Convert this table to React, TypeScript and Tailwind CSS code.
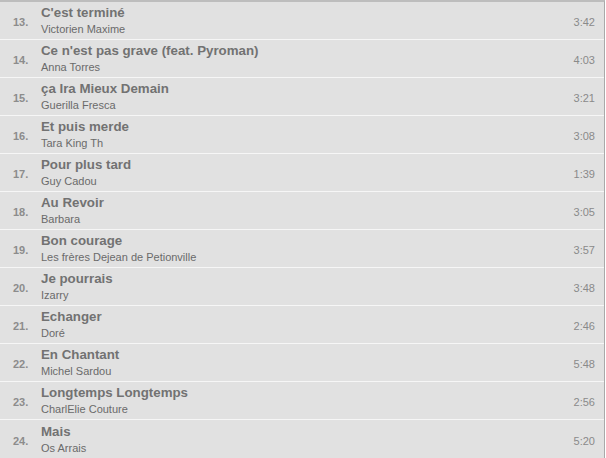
import React from 'react'

interface Track {
  num: number
  title: string
  artist: string
  duration: string
}

const tracks: Track[] = [
  { num: 13, title: "C'est terminé", artist: 'Victorien Maxime', duration: '3:42' },
  { num: 14, title: "Ce n'est pas grave (feat. Pyroman)", artist: 'Anna Torres', duration: '4:03' },
  { num: 15, title: 'ça Ira Mieux Demain', artist: 'Guerilla Fresca', duration: '3:21' },
  { num: 16, title: 'Et puis merde', artist: 'Tara King Th', duration: '3:08' },
  { num: 17, title: 'Pour plus tard', artist: 'Guy Cadou', duration: '1:39' },
  { num: 18, title: 'Au Revoir', artist: 'Barbara', duration: '3:05' },
  { num: 19, title: 'Bon courage', artist: 'Les frères Dejean de Petionville', duration: '3:57' },
  { num: 20, title: 'Je pourrais', artist: 'Izarry', duration: '3:48' },
  { num: 21, title: 'Echanger', artist: 'Doré', duration: '2:46' },
  { num: 22, title: 'En Chantant', artist: 'Michel Sardou', duration: '5:48' },
  { num: 23, title: 'Longtemps Longtemps', artist: 'CharlElie Couture', duration: '2:56' },
  { num: 24, title: 'Mais', artist: 'Os Arrais', duration: '5:20' },
]

function TrackRow({ track }: { track: Track }) {
  return (
    <li className="flex h-[38px] items-center border-b border-[#f6f6f6] bg-[#e1e1e1] last:border-b-0">
      <span className="w-[41px] shrink-0 pl-[13px] pt-[4px] text-[11px] font-bold text-[#8c8c8c]">
        {track.num}.
      </span>
      <div className="flex min-w-0 flex-1 flex-col pb-[1px]">
        <span className="text-[13.3px] font-bold leading-[17px] text-[#727272]">{track.title}</span>
        <span className="mt-[1px] text-[11px] leading-[14px] text-[#6a6a6a]">{track.artist}</span>
      </div>
      <span className="pr-[9px] pt-[4px] text-[11px] text-[#8a8a8a]">{track.duration}</span>
    </li>
  )
}

export default function App() {
  return (
    <div className="h-[458px] w-[606px] bg-white" style={{ fontFamily: '"Liberation Sans", Arial, sans-serif' }}>
      <ul className="w-[605px] border-t-2 border-r border-b-2 border-t-[#bdbdbd] border-r-[#a9a9a9] border-b-[#9a9a9a]">
        {tracks.map((t) => (
          <TrackRow key={t.num} track={t} />
        ))}
      </ul>
    </div>
  )
}
